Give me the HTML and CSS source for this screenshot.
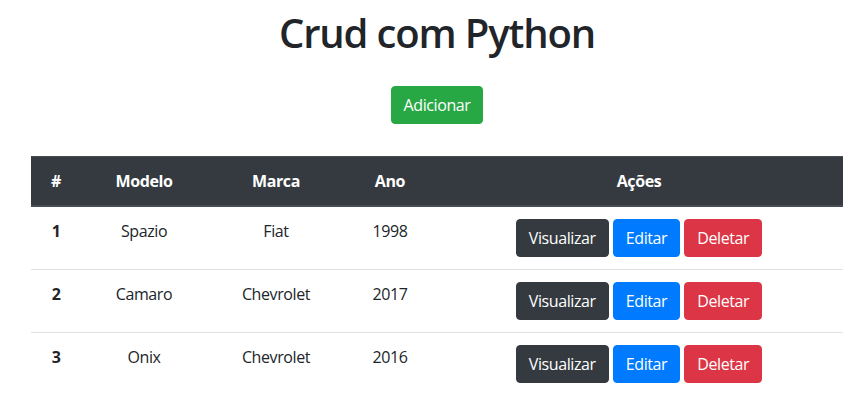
FILE: index.html
```html
<!DOCTYPE html>
<html lang="pt-br">
<head>
<meta charset="utf-8">
<title>Crud com Python</title>
<link rel="stylesheet" href="styles.css">
</head>
<body>
<div class="page">
  <h1 class="title">Crud com Python</h1>
  <div class="add-row"><a class="btn btn-success" href="#">Adicionar</a></div>
  <table class="table">
    <thead>
      <tr>
        <th class="c-id">#</th>
        <th class="c-model">Modelo</th>
        <th class="c-brand">Marca</th>
        <th class="c-year">Ano</th>
        <th class="c-actions">Ações</th>
      </tr>
    </thead>
    <tbody>
      <tr>
        <th>1</th><td>Spazio</td><td>Fiat</td><td>1998</td>
        <td><div class="actions"><a class="btn btn-dark" href="#">Visualizar</a><a class="btn btn-primary" href="#">Editar</a><a class="btn btn-danger" href="#">Deletar</a></div></td>
      </tr>
      <tr>
        <th>2</th><td>Camaro</td><td>Chevrolet</td><td>2017</td>
        <td><div class="actions"><a class="btn btn-dark" href="#">Visualizar</a><a class="btn btn-primary" href="#">Editar</a><a class="btn btn-danger" href="#">Deletar</a></div></td>
      </tr>
      <tr>
        <th>3</th><td>Onix</td><td>Chevrolet</td><td>2016</td>
        <td><div class="actions"><a class="btn btn-dark" href="#">Visualizar</a><a class="btn btn-primary" href="#">Editar</a><a class="btn btn-danger" href="#">Deletar</a></div></td>
      </tr>
    </tbody>
  </table>
</div>
</body>
</html>
```
FILE: styles.css
```css
* { box-sizing: border-box; }
html, body { margin: 0; padding: 0; background: #fff; }
body {
  font-family: "Open Sans", "Noto Sans", "Liberation Sans", sans-serif;
  font-size: 16px;
  line-height: 1.5;
  color: #212529;
  letter-spacing: -0.4px;
}
.page {
  width: 812px;
  margin-left: 31px;
  padding-top: 9px;
}
.title {
  margin: 0 0 29px;
  font-size: 40px;
  font-weight: 600;
  line-height: 48px;
  letter-spacing: -1.15px;
  text-align: center;
}
.add-row {
  display: flex;
  justify-content: center;
  margin-bottom: 32px;
}
.btn {
  display: inline-block;
  padding: 6px 12px;
  font-size: 16px;
  line-height: 24px;
  border-radius: 4px;
  color: #fff;
  text-decoration: none;
  border: 1px solid transparent;
}
.btn-success { background: #28a745; border-color: #28a745; }
.btn-dark { background: #343a40; border-color: #343a40; }
.btn-primary { background: #007bff; border-color: #007bff; }
.btn-danger { background: #dc3545; border-color: #dc3545; }

.table {
  width: 100%;
  border-collapse: collapse;
  text-align: center;
}
.table th, .table td {
  padding: 12px;
  vertical-align: top;
  border-top: 1px solid #dee2e6;
}
.table thead th {
  background: #343a40;
  color: #fff;
  font-weight: 700;
  border-top-color: #454d55;
  border-bottom: 2px solid #454d55;
}
.table tbody th { font-weight: 700; }
.c-id { width: 50px; }
.c-model { width: 126px; }
.c-brand { width: 138px; }
.c-year { width: 90px; }
.actions {
  display: flex;
  justify-content: center;
  gap: 4px;
}
```
